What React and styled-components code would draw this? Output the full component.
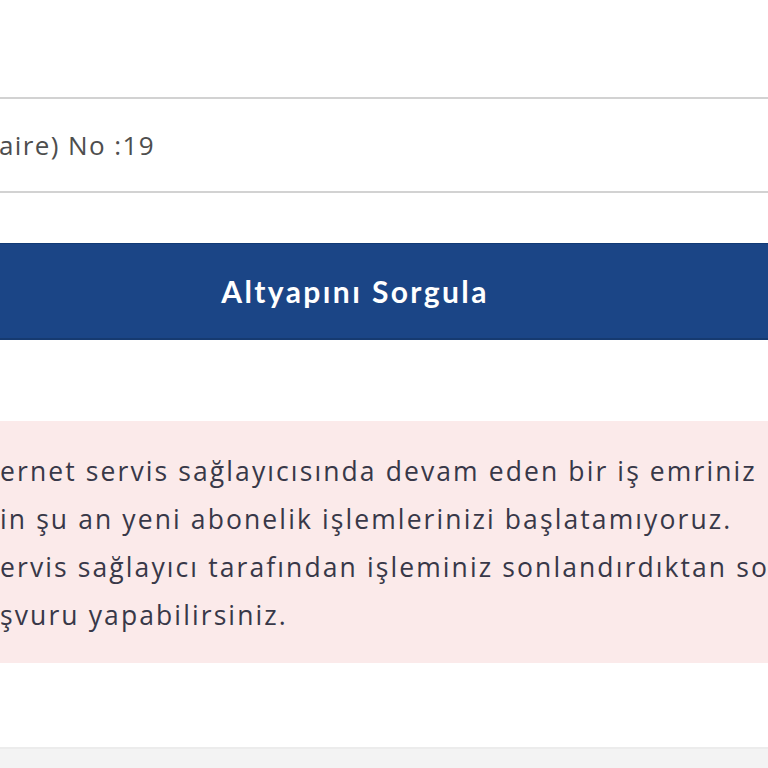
import React from 'react';
import styled, { createGlobalStyle } from 'styled-components';

const GlobalStyle = createGlobalStyle`
  html, body {
    margin: 0;
    padding: 0;
    background: #ffffff;
    overflow: hidden;
  }
  body {
    font-family: 'Open Sans', 'Noto Sans', sans-serif;
  }
`;

const Page = styled.div`
  width: 826px;
  margin-left: -58px;
  height: 768px;
  display: flex;
  flex-direction: column;
  background: #ffffff;
`;

const Form = styled.div`
  padding-top: 97px;
  display: flex;
  flex-direction: column;
`;

const AddressField = styled.div`
  height: 92px;
  border-top: 2px solid #d2d2d2;
  border-bottom: 2px solid #d2d2d2;
  display: flex;
  align-items: center;
  padding-left: 57px;
  font-size: 26px;
  color: #4e4e4e;
  letter-spacing: 1.4px;
`;

const QueryButton = styled.button`
  margin-top: 50px;
  height: 97px;
  border: none;
  border-top: 1px solid #123a75;
  border-bottom: 2px solid #163a70;
  background: #1b4586;
  color: #ffffff;
  font-family: 'Lato', 'Open Sans', sans-serif;
  font-weight: 700;
  font-size: 30px;
  letter-spacing: 2.4px;
  cursor: pointer;
`;

const Alert = styled.div`
  margin-top: 81px;
  height: 242px;
  background: #fbeaea;
  box-sizing: border-box;
  padding: 26px 0 0 58px;
  overflow: hidden;
`;

const AlertLine = styled.div`
  white-space: nowrap;
  font-size: 26.5px;
  font-weight: 500;
  line-height: 48px;
  color: #383848;
  letter-spacing: 2.1px;
`;

const Footer = styled.div`
  margin-top: 84px;
  flex: 1;
  background: #f3f3f3;
  border-top: 2px solid #ececec;
`;

const lines = [
  'ernet servis sağlayıcısında devam eden bir iş emriniz',
  'in şu an yeni abonelik işlemlerinizi başlatamıyoruz.',
  'ervis sağlayıcı tarafından işleminiz sonlandırdıktan so',
  'şvuru yapabilirsiniz.',
];

const App = () => {
  return (
    <>
      <GlobalStyle />
      <Page>
        <Form>
          <AddressField>aire) No :19</AddressField>
          <QueryButton>Altyapını Sorgula</QueryButton>
          <Alert>
            {lines.map((line, i) => (
              <AlertLine key={i}>{line}</AlertLine>
            ))}
          </Alert>
        </Form>
        <Footer />
      </Page>
    </>
  );
};

export default App;
